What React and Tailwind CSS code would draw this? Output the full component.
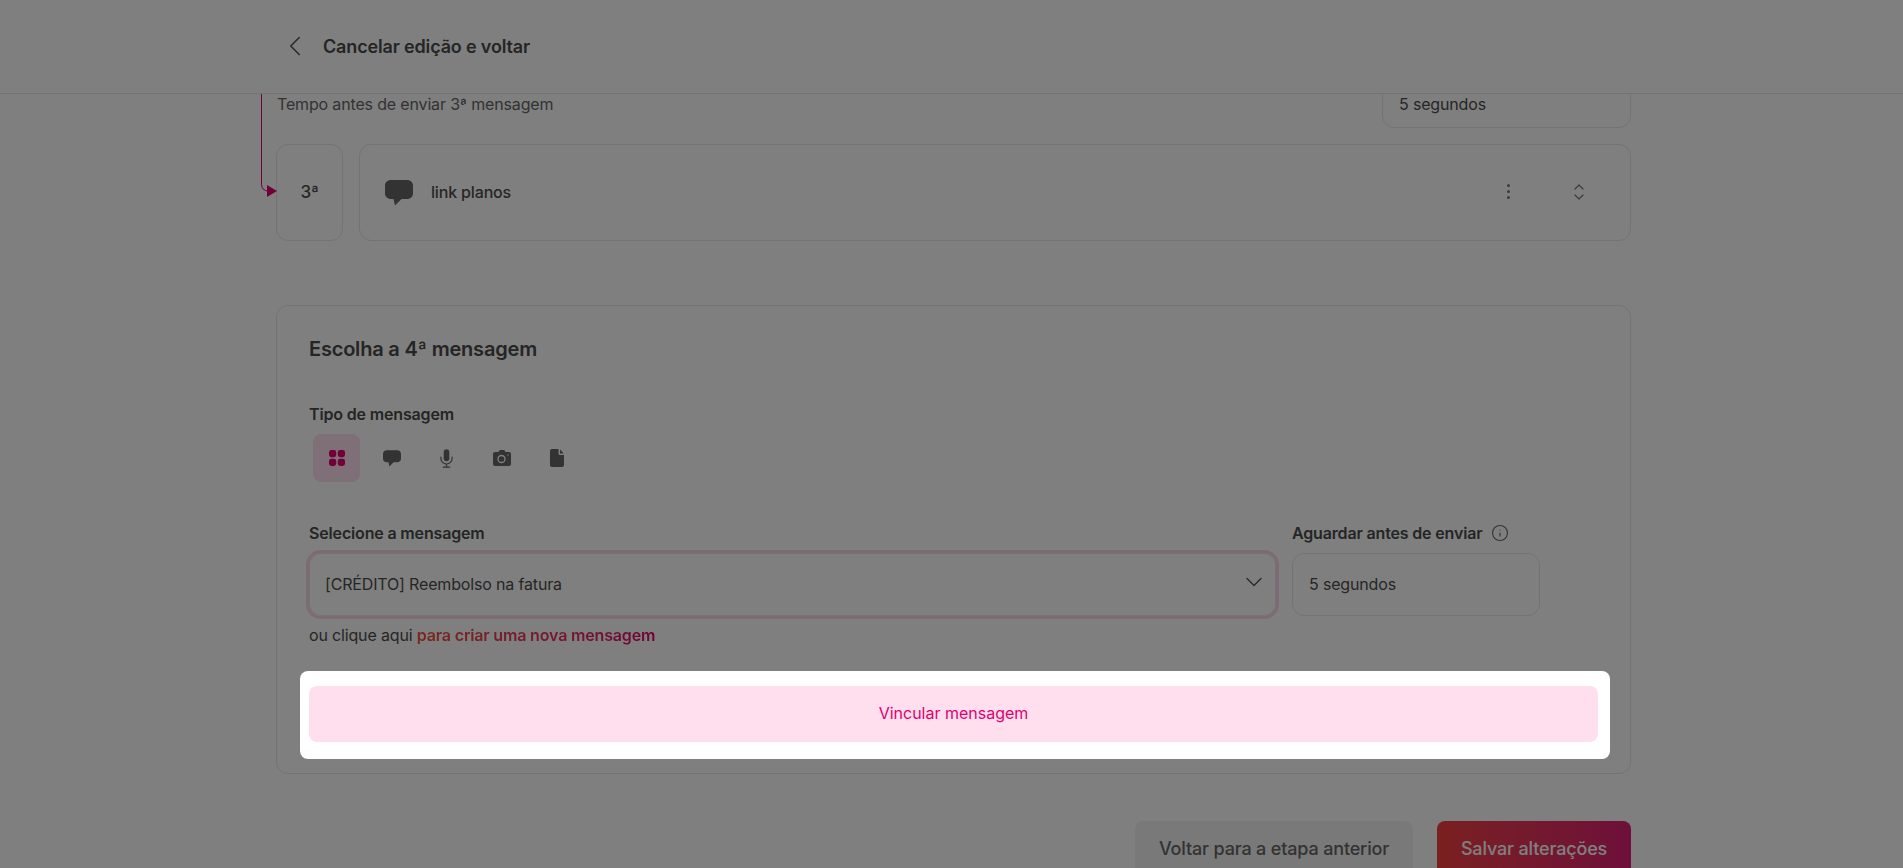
import { ChevronLeft, ChevronDown, Info } from "lucide-react";

function Bubble({ className }) {
  return (
    <svg viewBox="0 0 28 26" className={className} fill="currentColor">
      <path d="M6 0h16c3.5 0 6 2.4 6 5.5v8c0 3.1-2.5 5.500-6 5.500H16.500l-6.500 6.500-1.500-6.500H6c-3.500 0-6-2.400-6-5.500v-8C0 2.400 2.500 0 6 0z" />
    </svg>
  );
}

function Grid() {
  return (
    <svg viewBox="0 0 16 16" className="w-4 h-4" fill="#e0006e">
      <rect x="0" y="0" width="7.200" height="7.200" rx="2.400" />
      <rect x="8.800" y="0" width="7.200" height="7.200" rx="2.400" />
      <rect x="0" y="8.800" width="7.200" height="7.200" rx="2.400" />
      <rect x="8.800" y="8.800" width="7.200" height="7.200" rx="2.400" />
    </svg>
  );
}

function Mic() {
  return (
    <svg viewBox="0 0 14 20" className="w-[13px] h-[19px]">
      <rect x="4" y="0" width="6" height="13" rx="3" fill="currentColor" />
      <path d="M1 8.500v1.500a6 6 0 0 0 12 0V8.500M7 16v3M3.500 19.300h7" fill="none" stroke="currentColor" strokeWidth="1.300" strokeLinecap="round" />
    </svg>
  );
}

function Camera() {
  return (
    <svg viewBox="0 0 18 16" className="w-[18px] h-[16px]">
      <path d="M5.500 2 6.800 0h4.400l1.300 2H16a2 2 0 0 1 2 2v10a2 2 0 0 1-2 2H2a2 2 0 0 1-2-2V4a2 2 0 0 1 2-2z" fill="currentColor" />
      <circle cx="8.500" cy="9" r="3.500" fill="none" stroke="#fff" strokeWidth="1.300" />
      <circle cx="15" cy="5" r="0.700" fill="#fff" />
    </svg>
  );
}

function FileIcon() {
  return (
    <svg viewBox="0 0 14 18" className="w-[14px] h-[18px]" fill="currentColor">
      <path d="M2 0h6.500v4.500c0 .8.700 1.500 1.500 1.500h4v10a2 2 0 0 1-2 2H2a2 2 0 0 1-2-2V2a2 2 0 0 1 2-2z" />
      <path d="M10 0.300 13.700 4.500H10z" />
    </svg>
  );
}

function Tile({ active, children }) {
  return (
    <div className={`w-[47px] h-12 rounded-lg flex items-center justify-center text-[#666] ${active ? "bg-[#ffdfee]" : ""}`}>
      {children}
    </div>
  );
}

export default function App() {
  return (
    <div className="h-screen overflow-hidden bg-white text-[#4d4d4d] tracking-[-0.16px] font-['Inter',sans-serif]">
      <header className="relative z-[1] h-[94px] bg-white border-b border-[#e5e7eb] flex items-center pl-[278px]">
        <ChevronLeft className="w-[34px] h-[34px] -mt-0.5 text-[#555]" strokeWidth={1.100} />
        <span className="ml-[11px] text-lg font-semibold text-[#4a4a4a]">Cancelar edição e voltar</span>
      </header>

      <main className="relative w-[1355px] ml-[276px] -mt-[13px]">
        <svg className="absolute -left-[16px] top-0 w-[18px] h-[120px]" viewBox="0 0 18 120">
          <path d="M1.500 0v103q0 7 7 7" fill="none" stroke="#e0006e" strokeWidth="1" />
          <path d="M7 104l10 6-10 6z" fill="#e0006e" />
        </svg>

        <div className="flex items-center justify-between h-[47px]">
          <span className="pl-px pb-0.5 text-[#666]">Tempo antes de enviar 3ª mensagem</span>
          <div className="w-[249px] h-[47px] flex items-center pl-4 pb-0.5 border border-[#e5e7eb] rounded-xl">5 segundos</div>
        </div>

        <div className="flex gap-4 mt-4 h-[97px]">
          <div className="w-[67px] flex items-center justify-center border border-[#e5e7eb] rounded-xl text-[17px] font-medium">3ª</div>
          <div className="flex-1 flex items-center border border-[#e5e7eb] rounded-xl pl-[25px] pb-0.5">
            <Bubble className="w-[28px] h-[26px] text-[#666] mt-[2px]" />
            <span className="ml-[18px] font-medium">link planos</span>
            <div className="ml-auto flex items-center gap-[63px] pr-[45px]">
              <span className="flex flex-col gap-[3px]">
                <i className="w-[3px] h-[3px] rounded-full bg-[#777]" />
                <i className="w-[3px] h-[3px] rounded-full bg-[#777]" />
                <i className="w-[3px] h-[3px] rounded-full bg-[#777]" />
              </span>
              <svg viewBox="0 0 12 16" className="w-3 h-4" fill="none" stroke="#777" strokeWidth="1.200" strokeLinecap="round" strokeLinejoin="round">
                <path d="M2 5l4-4 4 4M2 11l4 4 4-4" />
              </svg>
            </div>
          </div>
        </div>

        <section className="mt-16 border border-[#e5e7eb] rounded-xl pl-[23px] pr-5 pt-[29px] pb-[14px]">
          <div className="pl-[9px] pr-3">
            <h2 className="text-xl leading-7 font-semibold tracking-[-0.2px] text-[#4a4a4a]">Escolha a 4ª mensagem</h2>
            <p className="mt-[39px] font-semibold text-[#4a4a4a]">Tipo de mensagem</p>
            <div className="mt-2 ml-1 flex gap-2">
              <Tile active><Grid /></Tile>
              <Tile><Bubble className="w-[18px] h-[17px]" /></Tile>
              <Tile><Mic /></Tile>
              <Tile><Camera /></Tile>
              <Tile><FileIcon /></Tile>
            </div>
            <div className="mt-[39px] flex gap-4">
              <div className="w-[967px]">
                <p className="font-semibold text-[#4a4a4a]">Selecione a mensagem</p>
                <div className="mt-2 h-[63px] flex items-center justify-between pl-[15px] pr-[7px] border border-[#e5e7eb] rounded-xl ring-[3px] ring-[#fbd5e5]">
                  <span className="pb-px">[CRÉDITO] Reembolso na fatura</span>
                  <ChevronDown className="w-7 h-7 -mt-[5px] text-[#555]" strokeWidth={1.200} />
                </div>
              </div>
              <div className="w-[248px]">
                <p className="font-semibold text-[#4a4a4a] flex items-center gap-[9px]">
                  Aguardar antes de enviar
                  <Info className="w-[18px] h-[18px] text-[#666]" strokeWidth={1.500} />
                </p>
                <div className="mt-2 h-[63px] flex items-center pl-4 pb-0.5 border border-[#e5e7eb] rounded-xl">5 segundos</div>
              </div>
            </div>
            <p className="mt-[7px]">
              ou clique aqui{" "}
              <span className="font-semibold text-transparent bg-clip-text bg-gradient-to-r from-[#f04e3e] to-[#e0006e]">para criar uma nova mensagem</span>
            </p>
          </div>

          <div className="relative z-10 mt-6 bg-white rounded-lg pl-[9px] pr-3 pt-[15px] pb-[17px] shadow-[0_0_0_9999px_rgba(0,0,0,0.5)]">
            <button className="w-full h-14 pb-0.5 rounded-lg bg-[#ffdfee] text-[#e0006e] tracking-normal">Vincular mensagem</button>
          </div>
        </section>

        <div className="mt-[47px] flex justify-end gap-6">
          <button className="w-[278px] h-14 rounded-lg bg-[#f2f2f2] text-[#666] text-lg font-medium">Voltar para a etapa anterior</button>
          <button className="w-[194px] h-14 rounded-lg bg-gradient-to-r from-[#f44040] to-[#dc1f73] text-white text-lg font-medium">Salvar alterações</button>
        </div>
      </main>
    </div>
  );
}
